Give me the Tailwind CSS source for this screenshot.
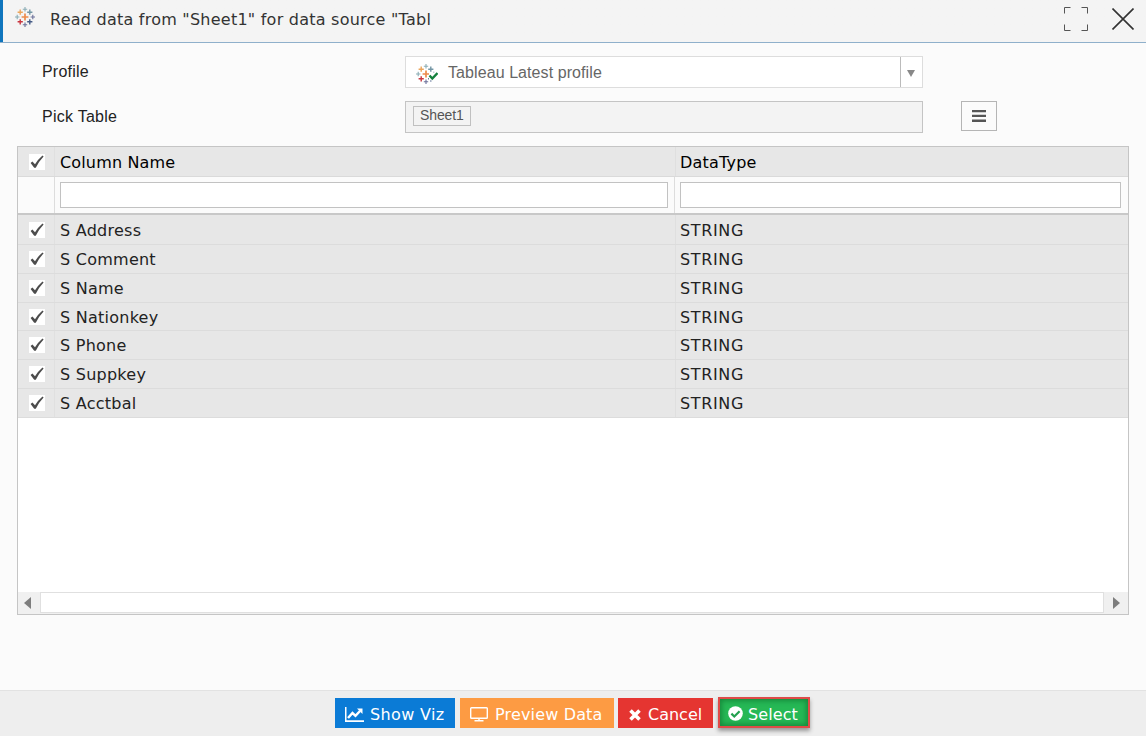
<!DOCTYPE html>
<html lang="en">
<head>
    <meta charset="UTF-8">
    <meta name="viewport" content="width=device-width, initial-scale=1.0">
    <title>Read data from Sheet1</title>
    <script src="https://cdn.jsdelivr.net/npm/@tailwindcss/browser@4"></script>
</head>
<body class="bg-[#fbfbfb] font-['DejaVu_Sans',sans-serif] text-[#222]">
    <svg class="hidden">
        <symbol id="tableau" viewBox="0 0 20 20">
            <g fill="none" stroke-width="1.4">
                <path stroke="#ed8b4c" d="M10 6.6v6.8M6.6 10h6.8" stroke-width="1.7" />
                <path stroke="#eba55c" d="M5.2 2.6v5.2M2.6 5.2h5.2" />
                <path stroke="#7396a5" d="M14.8 2.6v5.2M12.2 5.2h5.2" />
                <path stroke="#c9353f" d="M5.2 12.2v5.2M2.6 14.8h5.2" />
                <path stroke="#465c86" d="M14.8 12.2v5.2M12.2 14.8h5.2" />
                <path stroke="#8badb5" d="M10 0v4.4M7.8 2.2h4.4M2.2 7.8v4.4M0 10h4.4" stroke-width="1.1" />
                <path stroke="#6b7099" d="M10 15.6V20M7.8 17.8h4.4M17.8 7.8v4.4M15.6 10H20" stroke-width="1.1" />
            </g>
        </symbol>
        <symbol id="check" viewBox="0 0 16 16">
            <path d="M1.6 9 3.4 7.6 6 10.2Q9.2 5 13.5 1.4L14.6 2.4Q10 7 6.8 13.8H5.2Z" fill="#4c4c4c" />
        </symbol>
    </svg>

    <div class="h-[736px] w-[1146px] flex flex-col overflow-hidden">
        <!-- Title bar -->
        <header class="h-[43px] shrink-0 flex items-start bg-[#f4f4f4] border-b border-[#8fb0cb] bg-linear-to-r from-[#0f75bd] from-[3px] to-[#f4f4f4] to-[3px]">
            <svg class="w-5 h-5 ml-[15px] mt-[7px]"><use href="#tableau" /></svg>
            <h1 class="ml-[15px] mt-2 w-[381px] overflow-hidden whitespace-nowrap text-base leading-6 tracking-[0.24px] text-[#333]">Read data from "Sheet1" for data source "Table</h1>
            <svg class="w-6 h-6 ml-auto mt-[7px]" viewBox="0 0 24 24" fill="none" stroke="#555"><path d="M.5 6.5v-6h6M17.5.5h6v6M23.5 17.5v6h-6M6.5 23.5h-6v-6" /></svg>
            <svg class="w-[22px] h-[22px] ml-6 mr-3 mt-2" viewBox="0 0 22 22" fill="none" stroke="#333" stroke-width="1.6"><path d="M.5.5l21 21M21.5.5l-21 21" /></svg>
        </header>

        <!-- Form -->
        <div class="pt-[13px] pl-[42px] flex flex-col gap-[13px] font-['Liberation_Sans',sans-serif] text-base">
            <div class="flex h-8">
                <label class="w-[363px] pt-1 leading-6 tracking-[0.2px]">Profile</label>
                <div class="w-[518px] flex border border-[#ddd] bg-white text-[#666]">
                    <svg class="w-[22px] h-5 ml-2.5 mt-[7px]" viewBox="0 0 22 20">
                        <use href="#tableau" width="20" height="20" />
                        <path d="M13 8.5h9v8h-9z" fill="#fff" />
                        <path d="M13.5 11.5l2.8 3L21.5 9" fill="none" stroke="#15803d" stroke-width="2.4" />
                    </svg>
                    <span class="ml-2.5 grow leading-[31px] tracking-[0.08px]">Tableau Latest profile</span>
                    <span class="w-[22px] border-l border-[#bbb] flex justify-center items-center">
                        <svg class="w-2 h-[7px] mt-[3px] mr-px" viewBox="0 0 8 7"><path d="M0 0h8L4 7z" fill="#888" /></svg>
                    </span>
                </div>
            </div>
            <div class="flex h-8">
                <label class="w-[363px] pt-1 leading-6 tracking-[0.26px]">Pick Table</label>
                <div class="w-[518px] border border-[#c4c4c4] bg-[#f3f3f3] pt-1 pl-[7px]">
                    <div class="w-[58px] h-5 border border-[#c0c0c0] pl-1.5 text-sm leading-4 tracking-[-0.1px] text-[#555]">Sheet1</div>
                </div>
                <button class="ml-[38px] w-9 h-[30px] border border-[#b5b5b5] flex items-center justify-center">
                    <svg class="w-3.5 h-3" viewBox="0 0 14 12"><path d="M0 0h14v2.3H0zM0 4.8h14v2.3H0zM0 9.6h14v2.3H0z" fill="#555" /></svg>
                </button>
            </div>
        </div>

        <!-- Columns grid -->
        <div class="mt-[13px] ml-[17px] w-[1112px] h-[469px] shrink-0 flex flex-col border border-[#c5c5c5] bg-white text-base">
            <div class="h-[30px] shrink-0 flex bg-[#e7e7e7] border-b border-[#dadada] text-black">
                <div class="w-[37px] border-r border-[#e0e0e0]"><svg class="ml-[11px] mt-[7px] w-4 h-4 bg-white"><use href="#check" /></svg></div>
                <div class="w-[621px] border-r border-[#dfdfdf] pl-[5px] leading-8 tracking-[0.15px]">Column Name</div>
                <div class="pl-1 leading-8 tracking-[0.2px]">DataType</div>
            </div>
            <div class="h-[38px] shrink-0 flex bg-[#fbfbfb] border-b-2 border-[#c8c8c8]">
                <div class="w-[37px] border-r border-[#ddd]"></div>
                <div class="w-[620px] border-r border-[#ddd] pl-[5px] pt-[5px]"><div class="w-[608px] h-[26px] border border-[#c2c2c2] bg-white"></div></div>
                <div class="pl-[5px] pt-[5px]"><div class="w-[441px] h-[26px] border border-[#c2c2c2] bg-white"></div></div>
            </div>
            <div id="rows" class="grow"></div>
            <div class="h-[22px] shrink-0 flex bg-[#f0f0f0] pb-px">
                <div class="w-[22px] flex items-center"><svg class="w-[7px] h-3 ml-1.5" viewBox="0 0 7 12"><path d="M7 0v12L0 6z" fill="#7d7d7d" /></svg></div>
                <div class="w-[1064px] border border-[#e0e0e0] bg-white"></div>
                <div class="flex items-center"><svg class="w-[7px] h-3 ml-[9px]" viewBox="0 0 7 12"><path d="M0 0v12l7-6z" fill="#7d7d7d" /></svg></div>
            </div>
        </div>

        <!-- Actions -->
        <footer class="mt-auto h-[46px] shrink-0 flex items-start bg-[#eee] border-t border-[#e2e2e2] pt-[7px] pl-[335px] text-base leading-[34px] text-white whitespace-nowrap">
            <button class="w-[120px] h-[30px] flex bg-[#0b7bd6]">
                <svg class="w-[19px] h-4 ml-2.5 mt-[9px]" viewBox="0 0 19 16"><path d="M0 0h1.5v13.3H19V15H0z" fill="#fff" /><path d="M3 11l4.5-5 3 2.8L15 4" fill="none" stroke="#fff" stroke-width="2.5" /><path d="M12 1.5h5.5V7z" fill="#fff" /></svg>
                <span class="ml-1.5 tracking-[0.35px]">Show Viz</span>
            </button>
            <button class="ml-[5px] w-[154px] h-[30px] flex bg-[#fd9b43]">
                <svg class="w-[18px] h-[15px] ml-2.5 mt-[9px]" viewBox="0 0 18 15" fill="none" stroke="#fff" stroke-width="1.4"><rect x=".7" y=".7" width="16.6" height="10.6" rx=".8" /><path d="M9 11v2.5M4.5 13.8h9" /></svg>
                <span class="ml-[7px] tracking-[0.16px]">Preview Data</span>
            </button>
            <button class="ml-1 w-[95px] h-[30px] flex bg-[#e53531]">
                <svg class="w-3 h-3 ml-[11px] mt-[11px]" viewBox="0 0 12 12"><path d="M1.5 1.5l9 9M10.5 1.5l-9 9" stroke="#fff" stroke-width="3.6" /></svg>
                <span class="ml-[7px]">Cancel</span>
            </button>
            <button class="ml-[5px] -mt-px w-[92px] h-[31px] flex border-2 border-[#df4b48] bg-[#26b855] shadow-[inset_0_0_5px_2px_#178c3d,0_3px_4px_#999]">
                <svg class="w-[15px] h-[15px] ml-2 mt-[7px]" viewBox="0 0 15 15"><circle cx="7.5" cy="7.5" r="7.3" fill="#fff" /><path d="M3.4 7.6l2.9 2.9 5.3-5.3" fill="none" stroke="#24a04f" stroke-width="2.2" /></svg>
                <span class="ml-[5px] leading-8 tracking-[0.1px]">Select</span>
            </button>
        </footer>
    </div>

    <script>
        const columns = ['S Address', 'S Comment', 'S Name', 'S Nationkey', 'S Phone', 'S Suppkey', 'S Acctbal'];
        document.getElementById('rows').innerHTML = columns.map(name => `
            <div class="h-[28.85px] first:h-[29.85px] flex bg-[#e7e7e7] border-b border-[#dcdcdc]">
                <div class="w-[37px] border-r border-[#e0e0e0]"><svg class="ml-[11px] mt-1.5 w-4 h-4 bg-white"><use href="#check" /></svg></div>
                <div class="w-[621px] border-r border-[#dfdfdf] pl-[5px] leading-[29px] tracking-[0.25px]">${name}</div>
                <div class="pl-1 leading-[29px] tracking-[0.65px]">STRING</div>
            </div>`).join('');
        // the first row is a pixel taller, keep its content in step with the rest
        document.querySelectorAll('#rows > div:first-child > div').forEach(cell => cell.classList.add('pt-px'));
    </script>
</body>
</html>
